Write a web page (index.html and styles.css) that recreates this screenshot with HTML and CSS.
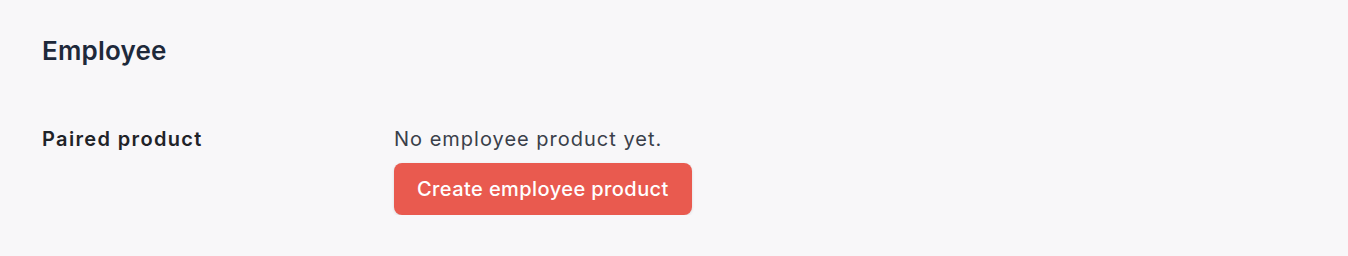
FILE: index.html
```html
<!DOCTYPE html>
<html>
<head>
<meta charset="utf-8">
<link rel="stylesheet" href="styles.css">
</head>
<body>
<section class="panel">
  <h2 class="title">Employee</h2>
  <div class="row">
    <div class="label">Paired product</div>
    <div class="value">
      <p class="empty">No employee product yet.</p>
      <button class="btn">Create employee product</button>
    </div>
  </div>
</section>
</body>
</html>
```
FILE: styles.css
```css
html, body {
  margin: 0;
  padding: 0;
  background: #f8f7f9;
}
body {
  font-family: "Inter", "Open Sans", sans-serif;
  color: #1f2937;
}
.panel {
  padding: 35px 42px 0 42px;
}
.title {
  margin: 0;
  font-size: 26px;
  line-height: 32px;
  font-weight: 600;
  letter-spacing: 0.2px;
  color: #1e293b;
}
.row {
  display: grid;
  grid-template-columns: 352px 1fr;
  margin-top: 58px;
}
.label {
  font-size: 20px;
  font-weight: 600;
  line-height: 28px;
  letter-spacing: 1.35px;
  color: #1f2328;
}
.value {
  display: flex;
  flex-direction: column;
  align-items: flex-start;
  gap: 10px;
}
.empty {
  margin: 0;
  font-size: 20px;
  line-height: 28px;
  letter-spacing: 1px;
  color: #3a3f4a;
}
.btn {
  font-family: inherit;
  font-size: 20px;
  font-weight: 500;
  letter-spacing: 0.42px;
  color: #fff;
  background: #e95a4f;
  border: none;
  border-radius: 8px;
  height: 52px;
  padding: 0 23px;
  box-shadow: 0 1px 3px rgba(0,0,0,0.12);
}
```
